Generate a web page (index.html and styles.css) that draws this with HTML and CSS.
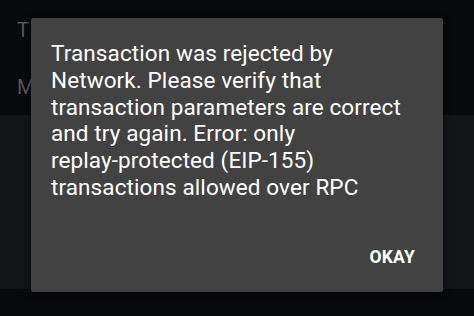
FILE: index.html
```html
<!DOCTYPE html>
<html>
<head>
<meta charset="utf-8">
<link rel="stylesheet" href="styles.css">
</head>
<body>
<div class="screen">
  <div class="top">
    <div class="row row1">To</div>
    <div class="row row2">Me</div>
  </div>
  <div class="band"></div>
  <div class="bottom"></div>
  <div class="dialog">
    <p class="msg">Transaction was rejected by Network. Please verify that transaction parameters are correct and try again. Error: only <span class="nowrap">replay-protected</span> (EIP-155) transactions allowed over RPC</p>
    <div class="actions"><span class="okay">OKAY</span></div>
  </div>
</div>
</body>
</html>
```
FILE: styles.css
```css
html, body {
  margin: 0;
  padding: 0;
  background: #08090b;
}
.screen {
  position: relative;
  width: 474px;
  height: 316px;
  overflow: hidden;
  font-family: Roboto, "Noto Sans", sans-serif;
  display: flex;
  flex-direction: column;
}
.top {
  height: 115px;
  background: #08090b;
  display: flex;
  flex-direction: column;
}
.row {
  color: #55565a;
  font-size: 20px;
  padding-left: 17px;
  height: 55px;
  line-height: 55px;
  letter-spacing: 3px;
}
.row1 { height: 60px; line-height: 60px; }
.band {
  height: 174px;
  background: #131418;
}
.bottom {
  flex: 1;
  background: #08090b;
}
.dialog {
  position: absolute;
  left: 31px;
  top: 18px;
  width: 412px;
  height: 274px;
  background: #424242;
  border-radius: 2px;
  box-sizing: border-box;
  padding: 22px 28px 0 20px;
  display: flex;
  flex-direction: column;
  box-shadow: 0 2px 6px rgba(0,0,0,0.5);
}
.msg {
  margin: 0;
  padding-right: 6px;
  color: #ffffff;
  font-size: 22.5px;
  line-height: 26.8px;
  letter-spacing: 0.1px;
}
.nowrap {
  white-space: nowrap;
}
.actions {
  margin-top: auto;
  display: flex;
  justify-content: flex-end;
  padding: 0 0 25px 0;
}
.okay {
  color: #ffffff;
  font-weight: bold;
  font-size: 17.5px;
  letter-spacing: 0.2px;
}
```
